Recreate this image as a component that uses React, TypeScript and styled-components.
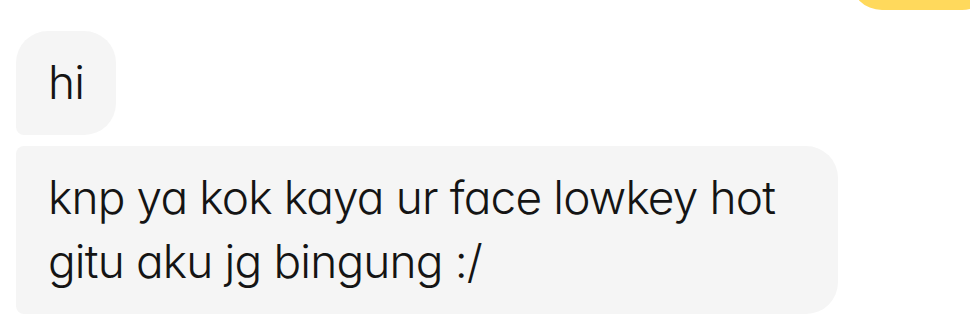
import React, { FC } from "react";
import styled, { createGlobalStyle } from "styled-components";

type Side = "me" | "them";
type Corner = "single" | "first" | "last";

interface Message {
  id: number;
  side: Side;
  corner: Corner;
  text: string;
}

// the sent message above is scrolled out of view, only its bottom edge shows
const messages: Message[] = [
  { id: 1, side: "me", corner: "single", text: "" },
  { id: 2, side: "them", corner: "first", text: "hi" },
  { id: 3, side: "them", corner: "last", text: "knp ya kok kaya ur face lowkey hot gitu aku jg bingung :/" },
];

const bubbleRadius = {
  single: "32px 32px 32px 32px",
  first: "32px 32px 32px 8px",
  last: "8px 32px 32px 8px",
};

const GlobalStyle = createGlobalStyle`
  html, body {
    margin: 0;
    padding: 0;
    background: #ffffff;
    overflow: hidden;
  }
  body {
    font-family: Inter, "Noto Sans", sans-serif;
    font-feature-settings: "cv11" 1;
  }
`;

const App: FC = () => {
  return (
    <>
      <GlobalStyle />
      <StyledChat>
        {messages.map((m, i) => (
          <StyledBubble
            key={m.id}
            $side={m.side}
            $corner={m.corner}
            $gap={i > 0 && messages[i - 1].side !== m.side ? 21 : 11}
            $first={i === 0}
          >
            {m.text}
          </StyledBubble>
        ))}
      </StyledChat>
    </>
  );
};

const StyledChat = styled.div`
  width: 970px;
  height: 323px;
  overflow: hidden;
  display: flex;
  flex-direction: column;
  padding: 0 16px;
  box-sizing: border-box;
`;

const StyledBubble = styled.div<{ $side: Side; $corner: Corner; $gap: number; $first: boolean }>`
  align-self: ${({ $side }) => ($side === "me" ? "flex-end" : "flex-start")};
  margin-top: ${({ $first, $gap }) => ($first ? "-94px" : `${$gap}px`)};
  margin-right: ${({ $side }) => ($side === "me" ? "-40px" : "0")};
  max-width: 758px;
  width: ${({ $side }) => ($side === "me" ? "80px" : "fit-content")};
  min-height: 64px;
  padding: 19px 32px 21px;
  border-radius: ${({ $corner }) => bubbleRadius[$corner]};
  background: ${({ $side }) => ($side === "me" ? "#ffd95c" : "#f5f5f5")};
  color: #141414;
  font-size: 46px;
  font-weight: 350;
  letter-spacing: -0.85px;
  line-height: 64px;
`;

export default App;
